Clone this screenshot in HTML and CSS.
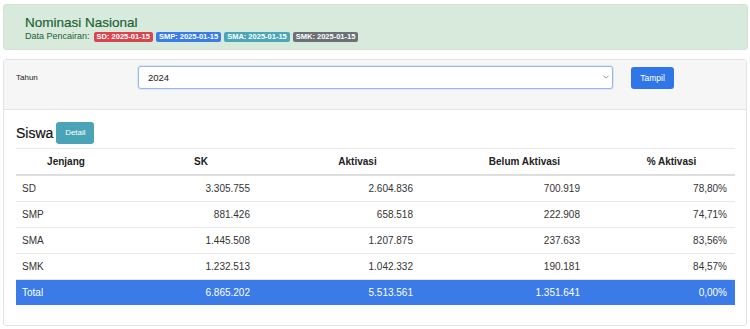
FILE: index.html
```html
<!DOCTYPE html>
<html lang="id">

<head>
    <meta charset="UTF-8">
    <meta name="viewport" content="width=device-width, initial-scale=1.0">
    <title>Nominasi Nasional</title>
    <link rel="stylesheet" href="styles.css">
</head>

<body>

    <div class="alert">
        <h4 class="alert-title">Nominasi Nasional</h4>
        <div class="alert-info">
            Data Pencairan:
            <span class="badge bg-danger">SD: 2025-01-15</span>
            <span class="badge bg-primary">SMP: 2025-01-15</span>
            <span class="badge bg-info">SMA: 2025-01-15</span>
            <span class="badge bg-secondary">SMK: 2025-01-15</span>
        </div>
    </div>

    <div class="card">
        <form class="card-header">
            <label class="form-label" for="tahun">Tahun</label>
            <div class="select-wrap">
                <select id="tahun" class="form-select">
                    <option>2024</option>
                </select>
                <svg class="chevron" width="8" height="6" viewBox="0 0 8 6">
                    <path d="M1.5 1.8 L4 4.2 L6.5 1.8" fill="none" stroke="#9a9a9a" stroke-width="1" />
                </svg>
            </div>
            <button type="button" class="btn btn-primary">Tampil</button>
        </form>

        <div class="card-body">
            <div class="section-title">
                <h3>Siswa</h3>
                <button type="button" class="btn btn-info">Detail</button>
            </div>

            <table class="data-table">
                <colgroup>
                    <col class="c-jenjang">
                    <col class="c-sk">
                    <col class="c-akt">
                    <col class="c-belum">
                    <col class="c-persen">
                </colgroup>
                <thead>
                    <tr>
                        <th class="th-jenjang">Jenjang</th>
                        <th>SK</th>
                        <th class="th-akt">Aktivasi</th>
                        <th class="th-belum">Belum Aktivasi</th>
                        <th class="th-persen">% Aktivasi</th>
                    </tr>
                </thead>
                <tbody>
                    <tr>
                        <td>SD</td>
                        <td class="num">3.305.755</td>
                        <td class="num">2.604.836</td>
                        <td class="num">700.919</td>
                        <td class="num">78,80%</td>
                    </tr>
                    <tr>
                        <td>SMP</td>
                        <td class="num">881.426</td>
                        <td class="num">658.518</td>
                        <td class="num">222.908</td>
                        <td class="num">74,71%</td>
                    </tr>
                    <tr>
                        <td>SMA</td>
                        <td class="num">1.445.508</td>
                        <td class="num">1.207.875</td>
                        <td class="num">237.633</td>
                        <td class="num">83,56%</td>
                    </tr>
                    <tr>
                        <td>SMK</td>
                        <td class="num">1.232.513</td>
                        <td class="num">1.042.332</td>
                        <td class="num">190.181</td>
                        <td class="num">84,57%</td>
                    </tr>
                    <tr class="row-total">
                        <td>Total</td>
                        <td class="num">6.865.202</td>
                        <td class="num">5.513.561</td>
                        <td class="num">1.351.641</td>
                        <td class="num">0,00%</td>
                    </tr>
                </tbody>
            </table>
        </div>
    </div>

</body>

</html>
```

FILE: styles.css
```css
body {
    font-family: "Liberation Sans", Arial, sans-serif;
    margin: 0;
    padding: 4px 2px 0 3px;
    color: #212529;
    background: #fff;
}

/* Top alert */
.alert {
    background-color: #d8eadc;
    border: 1px solid #d0e5d5;
    border-radius: 3px;
    height: 46px;
    box-sizing: border-box;
    padding: 9px 21px 0;
    color: #1c6334;
}

.alert-title {
    margin: 0;
    font-size: 13.5px;
    font-weight: normal;
    line-height: 17px;
    -webkit-text-stroke: 0.2px #1c6334;
}

.alert-info {
    font-size: 9px;
    line-height: 11px;
    display: flex;
    align-items: center;
    gap: 3px;
}

.badge {
    display: inline-block;
    color: #fff;
    font-size: 7.5px;
    font-weight: bold;
    line-height: 10px;
    padding: 0 3px;
    border-radius: 2px;
}

.bg-danger {
    margin-left: 1px;
    background-color: #d9454f;
}

.bg-primary { background-color: #3a7de8; }
.bg-info { background-color: #4ba6b8; }
.bg-secondary { background-color: #6b7177; }

/* Card */
.card {
    margin-top: 9px;
    border: 1px solid #e3e3e3;
    border-radius: 3px;
    margin-right: 1px;
    height: 267px;
    box-sizing: border-box;
}

.card-header {
    margin: 0;
    background-color: #f6f6f6;
    border-bottom: 1px solid #e3e3e3;
    height: 50px;
    box-sizing: border-box;
    display: flex;
    align-items: flex-start;
    padding: 6px 0 0 12px;
}

.form-label {
    font-size: 8px;
    width: 122px;
    margin-top: 7px;
    color: #222;
}

.select-wrap {
    position: relative;
    width: 475px;
}

.form-select {
    width: 100%;
    height: 23px;
    appearance: none;
    -webkit-appearance: none;
    background: #fff;
    border: 1px solid #9ab8e2;
    box-shadow: 0 0 0 1px #dbe6f6;
    border-radius: 3px;
    font-family: inherit;
    font-size: 9.5px;
    color: #222;
    padding: 0 9px;
    outline: none;
}

.chevron {
    position: absolute;
    right: 3px;
    top: 8px;
}

.btn {
    border: none;
    border-radius: 3px;
    color: #fff;
    font-family: inherit;
    cursor: pointer;
    padding: 0;
}

.btn-primary {
    background-color: #2f77e9;
    font-size: 8.5px;
    width: 43px;
    height: 22px;
    margin-left: 18px;
    margin-top: 1px;
}

.card-body {
    padding: 11px 12px 0 12px;
}

.section-title {
    display: flex;
    align-items: center;
    gap: 3px;
    height: 23px;
}

.section-title h3 {
    margin: 0;
    font-size: 14px;
    font-weight: normal;
    color: #111;
    -webkit-text-stroke: 0.2px #111;
}

.btn-info {
    background-color: #4aa3b6;
    font-size: 8px;
    width: 38px;
    height: 22px;
}

/* Table */
.data-table {
    width: 719px;
    border-collapse: collapse;
    margin-top: 4px;
    font-size: 10px;
    color: #333;
}

.c-jenjang { width: 128px; }
.c-sk { width: 114px; }
.c-akt { width: 163px; }
.c-belum { width: 167px; }
.c-persen { width: 147px; }

.data-table th {
    font-weight: bold;
    text-align: center;
    height: 25px;
    padding: 0;
    border-top: 1px solid #e8e8e8;
    border-bottom: 2px solid #dedede;
    color: #222;
}

.data-table th.th-jenjang { padding-right: 28px; }
.data-table th.th-akt { padding-left: 36px; }
.data-table th.th-belum { padding-left: 40px; }
.data-table th.th-persen { padding-left: 20px; }

.data-table td {
    height: 25px;
    padding: 0 6px;
    border-bottom: 1px solid #e8e8e8;
}

.data-table td.num {
    text-align: right;
    padding-right: 8px;
}

.row-total td {
    background-color: #3a7be8;
    color: #fff;
    border-bottom: none;
}
```
